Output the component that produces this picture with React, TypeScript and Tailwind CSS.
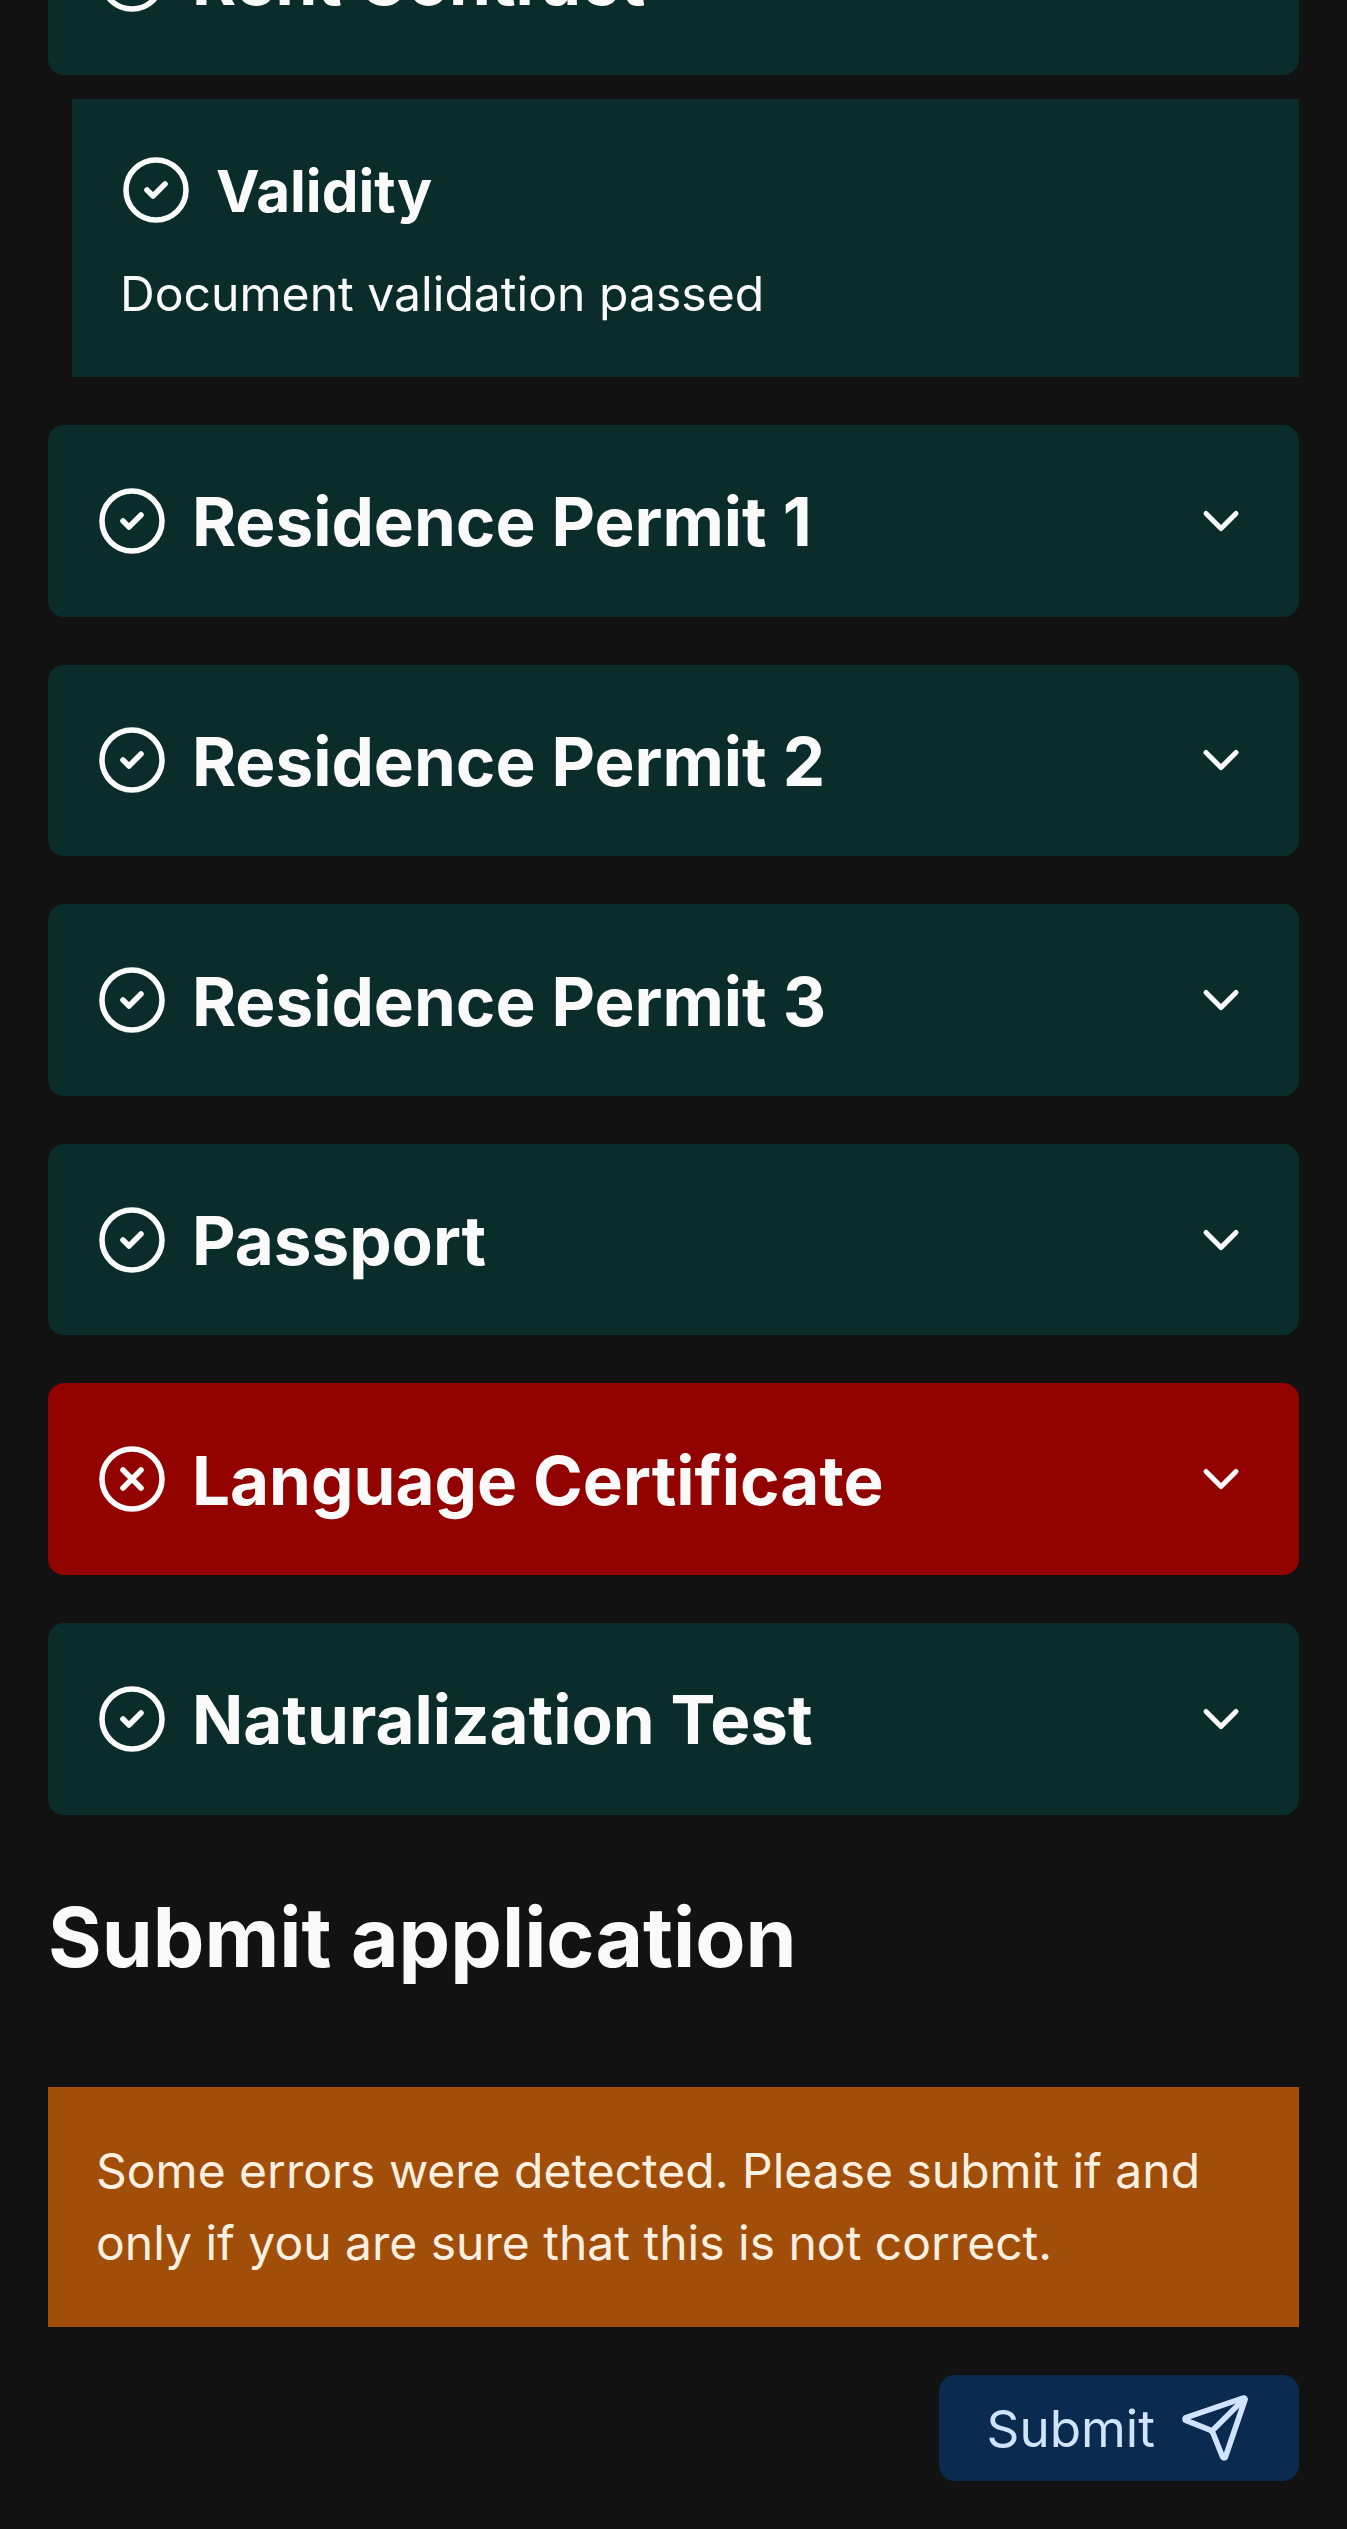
import { ChevronDown, CircleCheck, CircleX, Send } from 'lucide-react'

const documents = [
  { title: 'Residence Permit 1', ok: true },
  { title: 'Residence Permit 2', ok: true },
  { title: 'Residence Permit 3', ok: true },
  { title: 'Passport', ok: true },
  { title: 'Language Certificate', ok: false },
  { title: 'Naturalization Test', ok: true },
]

function DocumentRow({ title, ok }: { title: string; ok: boolean }) {
  const Icon = ok ? CircleCheck : CircleX

  return (
    <div className={`flex h-[191.7px] items-center justify-between rounded-2xl p-12 ${ok ? 'bg-[#0a2c2a]' : 'bg-[#920300]'}`}>
      <div className="flex items-center gap-6">
        <Icon size={72} strokeWidth={1.85} />
        <h3 className="pt-[3px] text-[67.3px] leading-[96px] font-bold">{title}</h3>
      </div>
      <ChevronDown size={60} strokeWidth={2} />
    </div>
  )
}

export default function App() {
  return (
    <div className="h-[2529px] overflow-hidden bg-[#121212] font-['Inter',sans-serif] text-[#fafafa]">
      <div className="-mt-[116.7px] flex flex-col px-12">
        <div className="flex h-[191.7px] items-center justify-between rounded-2xl bg-[#0a2c2a] p-12">
          <div className="flex items-center gap-6">
            <CircleCheck size={72} strokeWidth={1.85} />
            <h3 className="pt-[3px] text-[67.3px] leading-[96px] font-bold">Rent Contract</h3>
          </div>
        </div>

        <div className="mt-6 ml-6 bg-[#0a2c2a] p-12">
          <div className="mb-6 flex items-center gap-6">
            <CircleCheck size={72} strokeWidth={1.85} />
            <h4 className="pt-[2px] text-[58.4px] leading-[84px] font-bold">Validity</h4>
          </div>
          <p className="pt-[1px] text-[48.1px] leading-[71px]">Document validation passed</p>
        </div>

        <div className="mt-12 flex flex-col gap-[47.9px]">
          {documents.map((doc) => (
            <DocumentRow key={doc.title} title={doc.title} ok={doc.ok} />
          ))}
        </div>

        <h2 className="mt-[63px] text-[82px] leading-[120px] font-bold">Submit application</h2>

        <div className="mt-[89.2px] bg-[#a14e0a] p-12 text-[48px] leading-[72px] text-[#fdf0e0]">
          Some errors were detected. Please submit if and only if you are sure that this is not correct.
        </div>

        <div className="mt-12 flex justify-end">
          <button type="button" className="flex h-[106px] items-center gap-6 rounded-2xl bg-[#0b2a50] px-12 text-[51.2px] text-[#d1e4ff]">
            <span className="pt-[2px]">Submit</span>
            <Send size={72} strokeWidth={1.85} />
          </button>
        </div>
      </div>
    </div>
  )
}
